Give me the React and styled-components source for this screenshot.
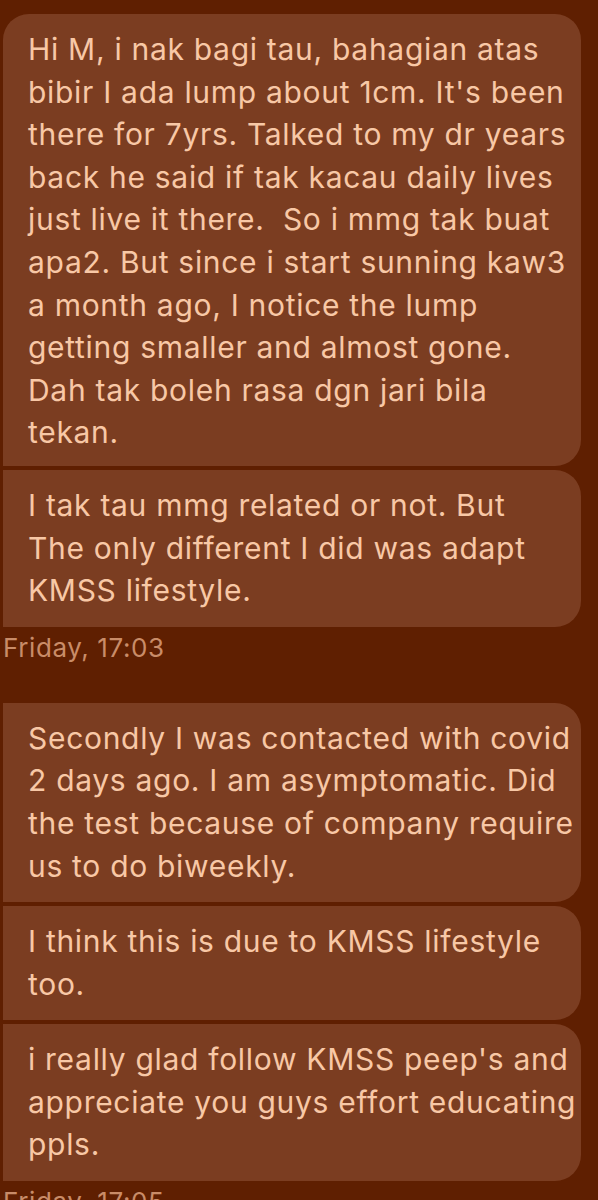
import React from "react";
import styled, { createGlobalStyle } from "styled-components";

const GlobalStyle = createGlobalStyle`
  html, body {
    margin: 0;
    padding: 0;
    background: #5f1f01;
  }
  body {
    font-family: Inter, "Noto Sans", sans-serif;
  }
`;

/* ----- layout ----- */
const Thread = styled.div`
  width: 598px;
  height: 1200px;
  overflow: hidden;
  padding: 14px 17px 0 3px;
  box-sizing: border-box;
  display: flex;
  flex-direction: column;
`;

const Group = styled.div`
  display: flex;
  flex-direction: column;
  gap: 4px;
`;

/* ----- bubble ----- */
const Bubble = styled.div`
  background: #7b3d21;
  color: #f8c8a6;
  font-size: 30px;
  line-height: 42.6px;
  letter-spacing: 0.7px;
  white-space: pre;
  padding: 14px 8px ${({ first }) => (first ? "12px" : "15px")} 25px;
  border-radius: ${({ first }) => (first ? "26px" : "0")} 26px 26px 0;
`;

/* ----- timestamp ----- */
const Stamp = styled.div`
  color: #c98c68;
  font-size: 26px;
  line-height: 32px;
  letter-spacing: 0.6px;
  margin-top: 5px;
  margin-bottom: ${({ gap }) => gap || 0}px;
`;

const messages = [
  {
    stamp: "Friday, 17:03",
    items: [
      [
        "Hi M, i nak bagi tau, bahagian atas",
        "bibir I ada lump about 1cm. It's been",
        "there for 7yrs. Talked to my dr years",
        "back he said if tak kacau daily lives",
        "just live it there.  So i mmg tak buat",
        "apa2. But since i start sunning kaw3",
        "a month ago, I notice the lump",
        "getting smaller and almost gone.",
        "Dah tak boleh rasa dgn jari bila",
        "tekan.",
      ],
      [
        "I tak tau mmg related or not. But",
        "The only different I did was adapt",
        "KMSS lifestyle.",
      ],
    ],
  },
  {
    stamp: "Friday, 17:05",
    items: [
      [
        "Secondly I was contacted with covid",
        "2 days ago. I am asymptomatic. Did",
        "the test because of company require",
        "us to do biweekly.",
      ],
      ["I think this is due to KMSS lifestyle", "too."],
      [
        "i really glad follow KMSS peep's and",
        "appreciate you guys effort educating",
        "ppls.",
      ],
    ],
  },
];

const Lines = ({ lines }) =>
  lines.map((l, i) => (
    <React.Fragment key={i}>
      {i > 0 && <br />}
      {l}
    </React.Fragment>
  ));

export default function App() {
  return (
    <>
      <GlobalStyle />
      <Thread>
        {messages.map((m, gi) => (
          <React.Fragment key={gi}>
            <Group>
              {m.items.map((lines, i) => (
                <Bubble key={i} first={gi === 0 && i === 0}>
                  <Lines lines={lines} />
                </Bubble>
              ))}
            </Group>
            <Stamp gap={gi === 0 ? 39 : 0}>{m.stamp}</Stamp>
          </React.Fragment>
        ))}
      </Thread>
    </>
  );
}
